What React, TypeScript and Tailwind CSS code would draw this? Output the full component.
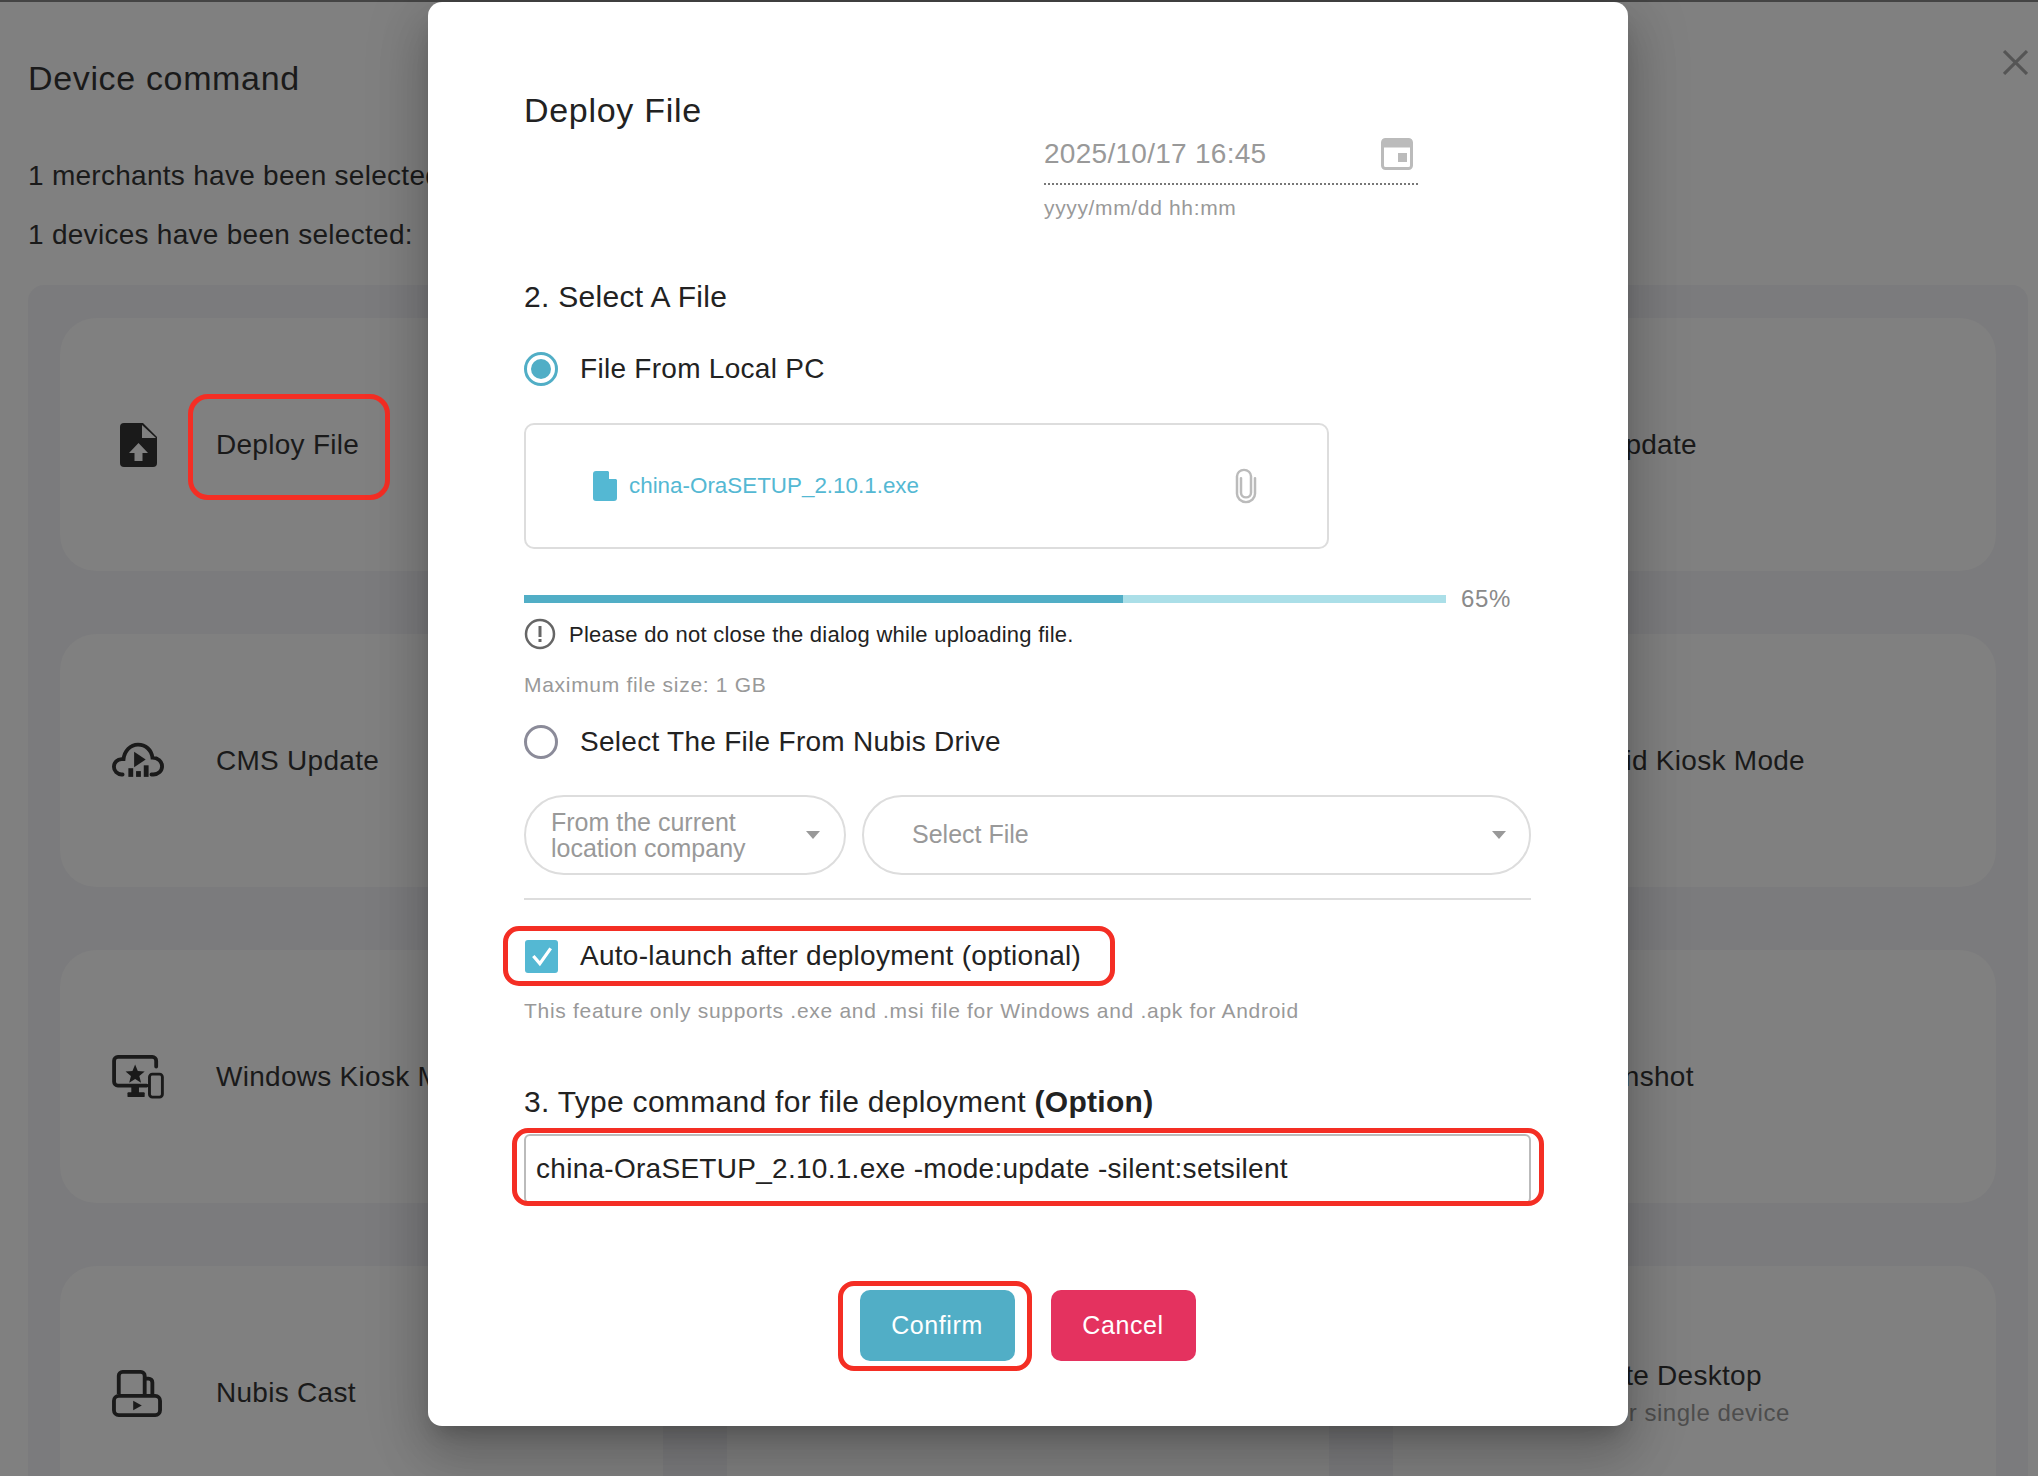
import { ReactNode } from "react";

function DeployIcon() {
  return (
    <svg viewBox="0 0 37 44" className="w-[37px] h-[44px]">
      <path
        d="M4 0H23L37 14V40a4 4 0 0 1-4 4H4a4 4 0 0 1-4-4V4a4 4 0 0 1 4-4Z"
        fill="#1a1a1a"
      />
      <path d="M22 2V15H36Z" fill="#808080" />
      <path d="M18.5 20L28 30H22.5V38H14.5V30H9Z" fill="#808080" />
    </svg>
  );
}

function CloudIcon() {
  return (
    <svg viewBox="0 0 54 38" fill="none" className="w-[52px] h-[37px]">
      <path
        d="M11 33.5H10C5.5 33.500 2 30 2 25.500C2 21 5.500 17.500 10 17.500H12C13 9 19 2.500 27 2.500C35 2.500 41 8 42 16C47.500 16 52 20 52 25C52 30 48 33.500 43 33.500H41"
        stroke="#1a1a1a"
        strokeWidth="4"
        strokeLinecap="round"
      />
      <path d="M23 10L35 18L23 26Z" fill="#1a1a1a" />
      <rect x="17" y="27" width="5" height="9" fill="#1a1a1a" />
      <rect x="25" y="30" width="5" height="6" fill="#1a1a1a" />
      <rect x="33" y="24" width="5" height="12" fill="#1a1a1a" />
    </svg>
  );
}

function KioskIcon() {
  return (
    <svg viewBox="0 0 54 46" fill="none" className="w-[52px] h-[44px]">
      <path
        d="M46 12V6a4 4 0 0 0-4-4H6a4 4 0 0 0-4 4V28a4 4 0 0 0 4 4H36"
        stroke="#1a1a1a"
        strokeWidth="4"
        strokeLinecap="round"
      />
      <path
        d="M24 10L26.800 16.800L34 17.300L28.400 22L30.200 29L24 25.200L17.800 29L19.600 22L14 17.300L21.200 16.800Z"
        fill="#1a1a1a"
      />
      <rect x="20" y="32" width="8" height="8" fill="#1a1a1a" />
      <rect x="16" y="39" width="18" height="5" rx="1" fill="#1a1a1a" />
      <rect x="39" y="20" width="13.500" height="24" rx="3" stroke="#1a1a1a" strokeWidth="3" />
    </svg>
  );
}

function CastIcon() {
  return (
    <svg viewBox="0 0 52 50" fill="none" className="w-[50px] h-[48px] mr-[2px]">
      <path d="M7 26V7a4 4 0 0 1 4-4H30a4 4 0 0 1 4 4V26" stroke="#1a1a1a" strokeWidth="4" />
      <path d="M34 10H38a4 4 0 0 1 4 4V26" stroke="#1a1a1a" strokeWidth="4" />
      <rect x="2" y="28" width="48" height="20" rx="5" stroke="#1a1a1a" strokeWidth="4" />
      <path d="M22 33L31 38L22 43Z" fill="#1a1a1a" />
    </svg>
  );
}

// the middle column sits fully behind the dialog, so its cards stay empty
const cards: { id: string; title?: string; sub?: string; icon?: ReactNode; boxed?: boolean }[] = [
  { id: "deploy", title: "Deploy File", icon: <DeployIcon />, boxed: true },
  { id: "mid-1" },
  { id: "ora", title: "Ora Update" },
  { id: "cms", title: "CMS Update", icon: <CloudIcon /> },
  { id: "mid-2" },
  { id: "android", title: "Android Kiosk Mode" },
  { id: "windows", title: "Windows Kiosk Mode", icon: <KioskIcon /> },
  { id: "mid-3" },
  { id: "screenshot", title: "Screenshot" },
  { id: "cast", title: "Nubis Cast", icon: <CastIcon /> },
  { id: "mid-4" },
  { id: "remote", title: "Remote Desktop", sub: "Only for single device" },
];

function RedBox({ className }: { className: string }) {
  return (
    <div
      className={`absolute border-[5px] border-[#f42e24] pointer-events-none ${className}`}
    />
  );
}

function Radio({ checked }: { checked?: boolean }) {
  return (
    <span
      className={`w-[34px] h-[34px] rounded-full border-[3px] flex items-center justify-center shrink-0 ${
        checked ? "border-[#51aec6]" : "border-[#8b8b99]"
      }`}
    >
      {checked && <span className="w-[20px] h-[20px] rounded-full bg-[#51aec6]" />}
    </span>
  );
}

function Caret() {
  return (
    <svg viewBox="0 0 14 8" className="w-[14px] h-[8px] shrink-0">
      <path d="M0 0H14L7 8Z" fill="#999999" />
    </svg>
  );
}

export default function App() {
  return (
    <div className="relative w-[2038px] h-[1476px] overflow-hidden bg-[#808080] text-[#1a1a1a] font-['Liberation_Sans',sans-serif] text-[28px] tracking-[0.28px]">
      <div className="h-[2px] bg-[#444444]" />

      <div className="pl-[28px] pt-[54px] h-[283px]">
        <h1 className="text-[34px] leading-[44px] tracking-[0.65px]">Device command</h1>
        <p className="mt-[58px] leading-[36px]">1 merchants have been selected:</p>
        <p className="mt-[23px] leading-[36px]">1 devices have been selected:</p>
      </div>

      <div className="ml-[28px] mr-[10px] px-[32px] pt-[33px] pb-[33px] rounded-[16px] bg-[#7b7b7d] grid grid-cols-3 gap-x-[64px] gap-y-[63px]">
        {cards.map((card) => (
          <div
            key={card.id}
            className="h-[253px] rounded-[36px] bg-[#808080] flex items-center"
          >
            <div className="w-[156px] shrink-0 flex justify-center">{card.icon}</div>
            <div className="relative">
              {card.title && <div className="leading-[36px]">{card.title}</div>}
              {card.sub && (
                <div className="mt-[4px] text-[24px] leading-[30px] tracking-[0.5px] text-[#4d4d4d]">
                  {card.sub}
                </div>
              )}
              {card.boxed && (
                <RedBox className="-left-[28px] w-[202px] -top-[33px] -bottom-[37px] rounded-[20px]" />
              )}
            </div>
          </div>
        ))}
      </div>

      <svg
        viewBox="0 0 24 24"
        className="absolute left-[2003px] top-[50px] w-[25px] h-[25px]"
        fill="none"
        stroke="#555555"
        strokeWidth="3"
      >
        <path d="M1 1L23 23M23 1L1 23" />
      </svg>

      <div className="absolute left-[428px] top-[2px] w-[1200px] h-[1424px] rounded-[14px] bg-white pl-[96px] pr-[97px] pt-[86px] text-[#222222] shadow-[0_14px_20px_-9px_rgba(0,0,0,0.2),0_31px_50px_4px_rgba(0,0,0,0.14),0_12px_60px_10px_rgba(0,0,0,0.12)]">
        <h2 className="text-[34px] leading-[44px] tracking-[0.7px]">Deploy File</h2>

        <div className="ml-[520px] w-[374px] mt-[3px] h-[50px] pb-[10px] border-b-2 border-dotted border-[#777777] flex items-center justify-between text-[#999999]">
          <span>2025/10/17 16:45</span>
          <svg viewBox="0 0 32 32" className="w-[32px] h-[32px] mr-[5px]">
            <rect x="1.500" y="1.500" width="29" height="29" rx="3" fill="none" stroke="#bbbbbb" strokeWidth="3" />
            <rect x="1.500" y="1.500" width="29" height="8" fill="#bbbbbb" />
            <rect x="17" y="15" width="9" height="9" fill="#bbbbbb" />
          </svg>
        </div>
        <div className="ml-[520px] mt-[9px] h-[28px] leading-[28px] text-[21px] tracking-[0.65px] text-[#999999]">
          yyyy/mm/dd hh:mm
        </div>

        <div className="mt-[55px] h-[40px] leading-[40px] text-[30px] tracking-[0.3px]">
          2. Select A File
        </div>

        <label className="mt-[32px] h-[40px] flex items-center gap-[22px]">
          <Radio checked />
          <span>File From Local PC</span>
        </label>

        <div className="mt-[34px] w-[805px] h-[126px] rounded-[10px] border-2 border-[#dddddd] flex items-center pl-[67px] pr-[70px]">
          <svg viewBox="0 0 24 30" className="w-[24px] h-[30px] shrink-0">
            <path
              d="M3 0H15L24 9V27a3 3 0 0 1-3 3H3a3 3 0 0 1-3-3V3a3 3 0 0 1 3-3Z"
              fill="#54b8d3"
            />
            <path d="M16 0L24 8H16Z" fill="#ffffff" />
          </svg>
          <span className="ml-[12px] text-[22.400px] tracking-[0px] text-[#54b8d3] flex-1">
            china-OraSETUP_2.10.1.exe
          </span>
          <svg
            viewBox="0 0 22 38"
            className="w-[22px] h-[38px] shrink-0"
            fill="none"
            stroke="#bbbbbb"
            strokeWidth="2.500"
            strokeLinecap="round"
          >
            <path d="M6 11V27a5 5 0 0 0 10 0V9a7 7 0 0 0-14 0V28a9 9 0 0 0 18 0V11" transform="translate(0 1) scale(1 0.92)" />
          </svg>
        </div>

        <div className="mt-[34px] h-[32px] flex items-center">
          <div className="w-[922px] h-[8px] bg-[#abdfe8]">
            <div className="h-full bg-[#51aec6]" style={{ width: "65%" }} />
          </div>
          <span className="ml-[15px] text-[24px] tracking-[0.6px] text-[#8a8a8a]">65%</span>
        </div>

        <div className="mt-[3px] h-[32px] flex items-center gap-[13px] text-[22px] tracking-[0.25px]">
          <svg viewBox="0 0 32 32" className="w-[32px] h-[32px] shrink-0" fill="none">
            <circle cx="16" cy="16" r="14" stroke="#666666" strokeWidth="2.500" />
            <rect x="14.500" y="8" width="3" height="11" fill="#666666" />
            <rect x="14.500" y="21" width="3" height="3" fill="#666666" />
          </svg>
          <span>Please do not close the dialog while uploading file.</span>
        </div>

        <div className="mt-[20px] h-[30px] leading-[30px] text-[21px] tracking-[0.7px] text-[#999999]">
          Maximum file size: 1 GB
        </div>

        <label className="mt-[22px] h-[40px] flex items-center gap-[22px]">
          <Radio />
          <span>Select The File From Nubis Drive</span>
        </label>

        <div className="mt-[33px] h-[80px] flex gap-[16px]">
          <div className="w-[322px] rounded-[40px] border-2 border-[#dddddd] flex items-center pl-[25px] pr-[24px] text-[#999999] text-[25px] tracking-[0px] leading-[26px]">
            <div className="flex-1">
              From the current
              <br />
              location company
            </div>
            <Caret />
          </div>
          <div className="flex-1 rounded-[40px] border-2 border-[#dddddd] flex items-center pl-[48px] pr-[23px] text-[#999999] text-[25px] tracking-[0px]">
            <span className="flex-1">Select File</span>
            <Caret />
          </div>
        </div>

        <div className="mt-[23px] h-[2px] bg-[#dddddd]" />

        <div className="relative mt-[36px] h-[40px] flex items-center gap-[22px]">
          <span className="ml-px w-[33px] h-[33px] rounded-[3px] bg-[#54b8d3] flex items-center justify-center shrink-0">
            <svg viewBox="0 0 24 24" className="w-[26px] h-[26px]" fill="none" stroke="#ffffff" strokeWidth="3">
              <path d="M4 12L10 19L20 5" />
            </svg>
          </span>
          <span>Auto-launch after deployment (optional)</span>
          <RedBox className="-left-[21px] w-[612px] -top-[10px] -bottom-[10px] rounded-[16px]" />
        </div>

        <div className="mt-[20px] h-[30px] leading-[30px] text-[21px] tracking-[0.7px] text-[#999999]">
          This feature only supports .exe and .msi file for Windows and .apk for Android
        </div>

        <div className="mt-[56px] h-[40px] leading-[40px] text-[30px] tracking-[0.3px]">
          3. Type command for file deployment <b>(Option)</b>
        </div>

        <div className="relative mt-[12px] h-[70px] border-2 border-[#bbbbbb] rounded-[6px] flex items-center pl-[10px]">
          <span>china-OraSETUP_2.10.1.exe -mode:update -silent:setsilent</span>
          <RedBox className="-left-[14px] -right-[15px] -top-[8px] -bottom-[4px] rounded-[16px]" />
        </div>

        <div className="mt-[86px] flex justify-center gap-[36px] text-[25px] text-white">
          <div className="relative">
            <button className="w-[155px] h-[71px] rounded-[10px] bg-[#51aec6] tracking-[0.6px]">
              Confirm
            </button>
            <RedBox className="-left-[22px] -right-[17px] -top-[9px] -bottom-[10px] rounded-[16px]" />
          </div>
          <button className="w-[145px] h-[71px] rounded-[10px] bg-[#e4325f] tracking-[0.6px]">
            Cancel
          </button>
        </div>
      </div>
    </div>
  );
}
